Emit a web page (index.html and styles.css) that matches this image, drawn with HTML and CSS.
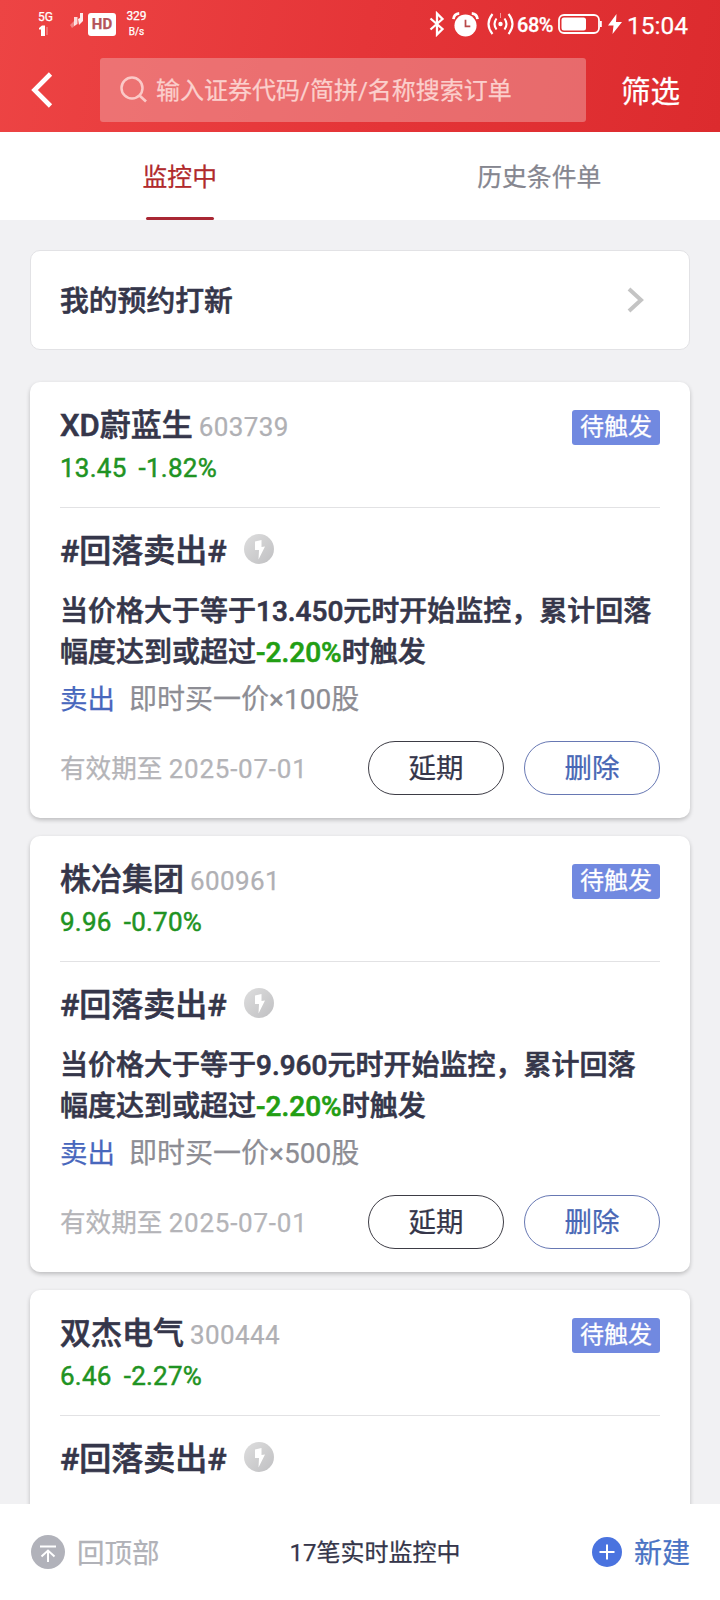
FILE: index.html
```html
<!DOCTYPE html>
<html lang="zh-CN">
<head>
<meta charset="utf-8">
<title>条件单</title>
<link rel="stylesheet" href="styles.css">
</head>
<body>
<svg class="defs" width="0" height="0">
  <defs>
    <linearGradient id="silver" x1="0" y1="0" x2="1" y2="1"><stop offset="0" stop-color="#dedede"/><stop offset="1" stop-color="#c0c0c2"/></linearGradient>
    <symbol id="flash" viewBox="0 0 30 30"><circle cx="15" cy="15" r="15" fill="url(#silver)"/><path d="M11 7.500l6.500-1.500v7l3.500-.5-6.500 13 .5-9.500h-4z" fill="#fff"/></symbol>
  </defs>
</svg>
<div class="screen">
  <header class="header">
    <div class="status">
      <div class="signal">
        <span class="net">5G</span>
        <svg width="20" height="14" viewBox="0 0 20 14"><path d="M1 4l3-2.500h3V12H3V5.500H1z" fill="#fff"/><path d="M8 3h2v8H8z" fill="#fff" opacity=".25"/></svg>
      </div>
      <svg class="bars" width="14" height="18" viewBox="0 0 14 18"><path d="M0 13l4-4 2 4-4 3z" fill="#fff" opacity=".35"/><path d="M4 5h3.500v7L4 14z" fill="#fff" opacity=".8"/><path d="M8 7l2-1V1h3v8l-4 4z" fill="#fff" opacity=".9"/></svg>
      <span class="hd">HD</span>
      <div class="rate"><span>329</span><span class="unit">B/s</span></div>
      <div class="status-right">
        <svg class="bt" width="16" height="26" viewBox="0 0 16 26"><path d="M1.500 7.500L13.500 18 8 23.500v-21L13.500 8 1.500 18.500" fill="none" stroke="#fff" stroke-width="2.300"/></svg>
        <svg class="alarm" width="27" height="25" viewBox="0 0 28 26"><circle cx="14" cy="14" r="11.500" fill="#fff"/><path d="M1.500 7.500Q2 2 7.500 1.500M20.500 1.500Q26 2 26.500 7.500" fill="none" stroke="#fff" stroke-width="2.800"/><path d="M14 8v7h5" fill="none" stroke="#b84a4a" stroke-width="1.800"/></svg>
        <svg class="hotspot" width="27" height="24" viewBox="0 0 27 24"><circle cx="13.500" cy="12" r="2.200" fill="#fff"/><path d="M9.500 6.500q-4 5.500 0 11M17.500 6.500q4 5.500 0 11M5.500 2q-8 10 0 20M21.500 2q8 10 0 20" fill="none" stroke="#fff" stroke-width="2.100"/><path d="M13.500 1v5" stroke="#fff" opacity=".5"/></svg>
        <span class="percent">68%</span>
        <svg class="battery" width="44" height="20" viewBox="0 0 44 20"><rect x="1" y="1" width="40" height="18" rx="5" fill="none" stroke="#fff" stroke-width="1.800"/><rect x="3.500" y="3.500" width="24.500" height="13" rx="2.500" fill="#fff"/><path d="M42 7h1.800v6H42z" fill="#fff"/></svg>
        <svg class="bolt" width="14" height="20" viewBox="0 0 14 20"><path d="M8.500 0L0 11.500h5.500L4.500 20 14 8H8z" fill="#fff"/></svg>
        <span class="time">15:04</span>
      </div>
    </div>
    <div class="search-row">
      <svg class="back" width="22" height="36" viewBox="0 0 22 36"><path d="M19.500 2L3.500 18l16 16" fill="none" stroke="#fff" stroke-width="4.600"/></svg>
      <div class="search">
        <svg width="28" height="28" viewBox="0 0 28 28"><circle cx="12" cy="12" r="10.500" fill="none" stroke="#fbc9c7" stroke-width="2.500"/><path d="M19.500 19.500l6.500 6" stroke="#fbc9c7" stroke-width="2.700"/></svg>
        <span>输入证券代码/简拼/名称搜索订单</span>
      </div>
      <span class="filter">筛选</span>
    </div>
  </header>

  <nav class="tabs">
    <div class="tab active"><span>监控中</span></div>
    <div class="tab"><span>历史条件单</span></div>
  </nav>

  <main class="content">
    <section class="booking">
      <span>我的预约打新</span>
      <svg width="17" height="26" viewBox="0 0 17 26"><path d="M2 2l12 11L2 24" fill="none" stroke="#c4c4c4" stroke-width="4"/></svg>
    </section>

    <article class="card">
      <div class="card-head">
        <div class="title"><span class="name">XD蔚蓝生</span><span class="code">603739</span><span class="badge">待触发</span></div>
        <div class="quote"><span>13.45</span><span>-1.82%</span></div>
      </div>
      <div class="strategy"><span>#回落卖出#</span><svg width="30" height="30"><use href="#flash"/></svg></div>
      <p class="rule">当价格大于等于13.450元时开始监控，累计回落<br>幅度达到或超过<em>-2.20%</em>时触发</p>
      <div class="action"><span class="side">卖出</span><span>即时买一价×100股</span></div>
      <div class="card-foot"><span class="valid">有效期至 <span class="date">2025-07-01</span></span><span class="btn">延期</span><span class="btn blue">删除</span></div>
    </article>

    <article class="card">
      <div class="card-head">
        <div class="title"><span class="name">株冶集团</span><span class="code">600961</span><span class="badge">待触发</span></div>
        <div class="quote"><span>9.96</span><span>-0.70%</span></div>
      </div>
      <div class="strategy"><span>#回落卖出#</span><svg width="30" height="30"><use href="#flash"/></svg></div>
      <p class="rule">当价格大于等于9.960元时开始监控，累计回落<br>幅度达到或超过<em>-2.20%</em>时触发</p>
      <div class="action"><span class="side">卖出</span><span>即时买一价×500股</span></div>
      <div class="card-foot"><span class="valid">有效期至 <span class="date">2025-07-01</span></span><span class="btn">延期</span><span class="btn blue">删除</span></div>
    </article>

    <article class="card">
      <div class="card-head">
        <div class="title"><span class="name">双杰电气</span><span class="code">300444</span><span class="badge">待触发</span></div>
        <div class="quote"><span>6.46</span><span>-2.27%</span></div>
      </div>
      <div class="strategy"><span>#回落卖出#</span><svg width="30" height="30"><use href="#flash"/></svg></div>
    </article>
  </main>

  <footer class="footer">
    <div class="top-link"><svg width="34" height="34" viewBox="0 0 34 34"><circle cx="17" cy="17" r="17" fill="#b1b2ba"/><path d="M9 11.500h16M17 27V15.500M10.500 21.500l6.500-6 6.500 6" fill="none" stroke="#fff" stroke-width="2"/></svg><span>回顶部</span></div>
    <span class="count">17笔实时监控中</span>
    <div class="create"><svg width="30" height="30" viewBox="0 0 30 30"><circle cx="15" cy="15" r="15" fill="#4a73df"/><path d="M7.500 15h15M15 7.500v15" stroke="#fff" stroke-width="2"/></svg><span>新建</span></div>
  </footer>
</div>
</body>
</html>
```
FILE: styles.css
```css
* { box-sizing: border-box; }
body {
  margin: 0;
  font-family: Roboto, "Noto Sans CJK SC", sans-serif;
  color: #35364a;
  -webkit-text-stroke: .25px currentColor;
}
svg { display: block; flex: none; }
.defs { position: absolute; }
.screen {
  width: 720px;
  height: 1600px;
  display: flex;
  flex-direction: column;
  overflow: hidden;
  background: #f1f1f3;
  white-space: nowrap;
}

/* Header */
.header {
  height: 132px;
  flex: none;
  background: linear-gradient(100deg, #ed4444 0%, #e53538 50%, #dc2b2e 100%);
  color: #fff;
}
.status { height: 48px; display: flex; padding-left: 38px; }
.signal { width: 32px; padding-top: 10px; }
.net { display: block; height: 14px; font-size: 12px; line-height: 14px; }
.bars { margin-top: 12px; }
.hd {
  width: 28px;
  height: 23px;
  margin: 13px 0 0 4px;
  border-radius: 3px;
  background: #fff;
  color: #b5545a;
  font-size: 15px;
  font-weight: 700;
  line-height: 23px;
  text-align: center;
}
.rate {
  width: 41px;
  padding-top: 9px;
  display: flex;
  flex-direction: column;
  align-items: center;
  font-size: 12px;
  line-height: 14px;
}
.rate .unit { font-size: 10px; line-height: 18px; }
.status-right { display: flex; flex: 1; align-items: center; padding: 0 32px 0 0; justify-content: flex-end; }
.alarm { margin-left: 7px; }
.hotspot { margin-left: 8px; }
.percent { margin-left: 3px; padding-top: 2px; font-size: 20px; font-weight: 500; letter-spacing: -.5px; }
.battery { margin-left: 5px; }
.bolt { margin-left: 6px; }
.time { margin-left: 5px; padding-top: 2px; font-size: 24.500px; }
.search-row { display: flex; align-items: center; padding: 10px 0 0 31px; }
.search {
  width: 486px;
  height: 64px;
  margin-left: 47px;
  padding-left: 20px;
  display: flex;
  align-items: center;
  gap: 8px;
  border-radius: 3px;
  background: rgba(240, 165, 165, .5);
  color: #fbcfcc;
  font-size: 24px;
}
.search span { padding-bottom: 3px; }
.filter { margin-left: 35px; padding-bottom: 3px; font-size: 29.500px; }

/* Tabs */
.tabs { height: 88px; flex: none; display: flex; background: #fff; }
.tab { flex: 1; display: flex; justify-content: center; padding-right: 1px; color: #85868f; font-size: 24.800px; line-height: 91px; }
.tab.active { flex-direction: column; align-items: center; padding-right: 0; color: #b12a2c; }
.tab.active span { height: 85px; }
.tab.active::after { content: ""; width: 68px; height: 3px; border-radius: 2px; background: #a92834; }

/* Content */
.content { height: 1284px; flex: none; padding: 30px 30px 0; overflow: hidden; }
.booking {
  height: 100px;
  margin-bottom: 32px;
  padding: 0 45px 0 29px;
  display: flex;
  align-items: center;
  justify-content: space-between;
  border: 1px solid #e2e2e5;
  border-radius: 10px;
  background: #fff;
  font-size: 28.800px;
  font-weight: 500;
}
.booking span { padding-bottom: 4px; }
.booking span, .name, .strategy, .rule { -webkit-text-stroke-width: .6px; }
.card {
  height: 436px;
  margin-bottom: 18px;
  padding: 0 30px;
  border-radius: 10px;
  background: #fff;
  box-shadow: 0 2px 4px rgba(0, 0, 0, .22);
}
.card-head { height: 126px; padding-top: 19px; border-bottom: 1px solid #e2e2e4; }
.title { height: 49px; display: flex; align-items: baseline; line-height: 50px; }
.name { font-size: 31px; font-weight: 500; }
.code { margin-left: 6px; color: #b0b0b4; font-size: 26px; letter-spacing: .4px; }
.badge {
  width: 88px;
  height: 35px;
  margin: 9px 0 0 auto;
  align-self: flex-start;
  border-radius: 3px;
  background: #7189e0;
  color: #fff;
  font-size: 24px;
  line-height: 35px;
  text-align: center;
}
.quote { display: flex; gap: 12px; color: #1f9323; font-size: 26px; line-height: 36px; letter-spacing: .25px; -webkit-text-stroke-width: .5px; }
.strategy { height: 82px; display: flex; align-items: center; gap: 17px; font-size: 32px; font-weight: 500; }
.strategy span { padding-bottom: 2px; }
.rule { height: 82px; margin: 0; padding-top: 1px; font-size: 28px; line-height: 41px; font-weight: 500; }
.rule em { color: #229e13; font-style: normal; }
.action { height: 55px; display: flex; gap: 14px; color: #8d8d94; font-size: 28px; line-height: 55px; }
.side { color: #4867bd; font-size: 27.500px; }
.card-foot { height: 54px; margin-top: 14px; display: flex; align-items: center; gap: 20px; }
.valid { flex: 1; padding-bottom: 3px; color: #b4b4b8; font-size: 25.600px; }
.date { font-size: 26px; letter-spacing: .75px; }
.btn {
  width: 136px;
  height: 54px;
  border: 1px solid #3d3c45;
  border-radius: 27px;
  font-size: 27.500px;
  line-height: 53px;
  text-align: center;
}
.btn.blue { border-color: #6778b3; color: #4867b5; }

/* Footer */
.footer {
  height: 96px;
  flex: none;
  padding: 0 30px;
  display: grid;
  grid-template-columns: 1fr auto 1fr;
  align-items: center;
  background: #fff;
}
.footer span { padding-bottom: 3px; }
.top-link { display: flex; align-items: center; gap: 12px; padding-left: 1px; color: #b1b2b8; font-size: 27.500px; }
.count { margin-left: 30px; font-size: 24px; }
.create { display: flex; align-items: center; justify-content: flex-end; gap: 12px; color: #4a73c4; font-size: 28px; }
```
